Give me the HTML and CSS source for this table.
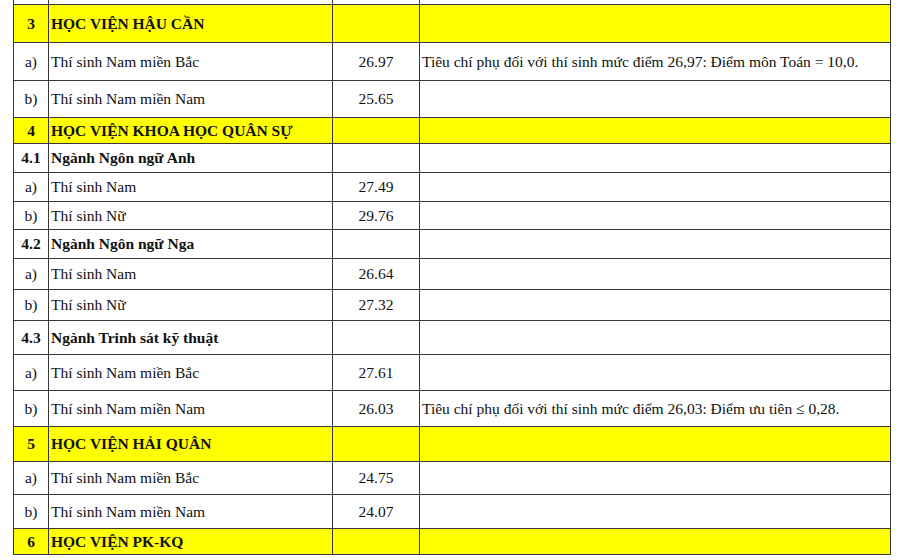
FILE: index.html
```html
<!DOCTYPE html>
<html lang="vi">
<head>
<meta charset="utf-8">
<title>Điểm chuẩn</title>
<link rel="stylesheet" href="styles.css">
</head>
<body>
<div class="sheet">
  <div class="row h5"><div class="c no"></div><div class="c name"></div><div class="c score"></div><div class="c note"></div></div>

  <div class="row h38 hl bold"><div class="c no">3</div><div class="c name">HỌC VIỆN HẬU CẦN</div><div class="c score"></div><div class="c note"></div></div>
  <div class="row h38"><div class="c no">a)</div><div class="c name">Thí sinh Nam miền Bắc</div><div class="c score">26.97</div><div class="c note">Tiêu chí phụ đối với thí sinh mức điểm 26,97: Điểm môn Toán = 10,0.</div></div>
  <div class="row h37"><div class="c no">b)</div><div class="c name">Thí sinh Nam miền Nam</div><div class="c score">25.65</div><div class="c note"></div></div>

  <div class="row h26 hl bold"><div class="c no">4</div><div class="c name">HỌC VIỆN KHOA HỌC QUÂN SỰ</div><div class="c score"></div><div class="c note"></div></div>
  <div class="row h29 bold"><div class="c no">4.1</div><div class="c name">Ngành Ngôn ngữ Anh</div><div class="c score"></div><div class="c note"></div></div>
  <div class="row h29"><div class="c no">a)</div><div class="c name">Thí sinh Nam</div><div class="c score">27.49</div><div class="c note"></div></div>
  <div class="row h28"><div class="c no">b)</div><div class="c name">Thí sinh Nữ</div><div class="c score">29.76</div><div class="c note"></div></div>
  <div class="row h29 bold"><div class="c no">4.2</div><div class="c name">Ngành Ngôn ngữ Nga</div><div class="c score"></div><div class="c note"></div></div>
  <div class="row h31"><div class="c no">a)</div><div class="c name">Thí sinh Nam</div><div class="c score">26.64</div><div class="c note"></div></div>
  <div class="row h31"><div class="c no">b)</div><div class="c name">Thí sinh Nữ</div><div class="c score">27.32</div><div class="c note"></div></div>
  <div class="row h34 bold"><div class="c no">4.3</div><div class="c name">Ngành Trinh sát kỹ thuật</div><div class="c score"></div><div class="c note"></div></div>
  <div class="row h36"><div class="c no">a)</div><div class="c name">Thí sinh Nam miền Bắc</div><div class="c score">27.61</div><div class="c note"></div></div>
  <div class="row h36"><div class="c no">b)</div><div class="c name">Thí sinh Nam miền Nam</div><div class="c score">26.03</div><div class="c note">Tiêu chí phụ đối với thí sinh mức điểm 26,03: Điểm ưu tiên ≤ 0,28.</div></div>

  <div class="row h35 hl bold"><div class="c no">5</div><div class="c name">HỌC VIỆN HẢI QUÂN</div><div class="c score"></div><div class="c note"></div></div>
  <div class="row h33"><div class="c no">a)</div><div class="c name">Thí sinh Nam miền Bắc</div><div class="c score">24.75</div><div class="c note"></div></div>
  <div class="row h34"><div class="c no">b)</div><div class="c name">Thí sinh Nam miền Nam</div><div class="c score">24.07</div><div class="c note"></div></div>

  <div class="row h26 hl bold"><div class="c no">6</div><div class="c name">HỌC VIỆN PK-KQ</div><div class="c score"></div><div class="c note"></div></div>
</div>
</body>
</html>
```

FILE: styles.css
```css
html, body {
  margin: 0;
  padding: 0;
  background: #ffffff;
}

body {
  font-family: "Liberation Serif", "Times New Roman", serif;
  font-size: 15.5px;
  color: #111111;
}

.sheet {
  margin-left: 13px;
  width: 878px;
  border-left: 1px solid #383838;
  box-sizing: border-box;
}

.row {
  display: grid;
  grid-template-columns: 35px 284px 87px 471px;
  border-bottom: 1px solid #383838;
  box-sizing: border-box;
  background: #ffffff;
}

.row.hl {
  background: #ffff00;
}

.bold {
  font-weight: bold;
}

.c {
  display: flex;
  align-items: center;
  border-right: 1px solid #383838;
  box-sizing: border-box;
  white-space: nowrap;
  overflow: hidden;
  line-height: 1;
}

.no {
  justify-content: center;
}

.name {
  padding-left: 2px;
}

.score {
  justify-content: center;
}

.note {
  padding-left: 2px;
}

.h5 { height: 5px; }
.h26 { height: 26px; }
.h28 { height: 28px; }
.h29 { height: 29px; }
.h31 { height: 31px; }
.h33 { height: 33px; }
.h34 { height: 34px; }
.h35 { height: 35px; }
.h36 { height: 36px; }
.h37 { height: 37px; }
.h38 { height: 38px; }
```
